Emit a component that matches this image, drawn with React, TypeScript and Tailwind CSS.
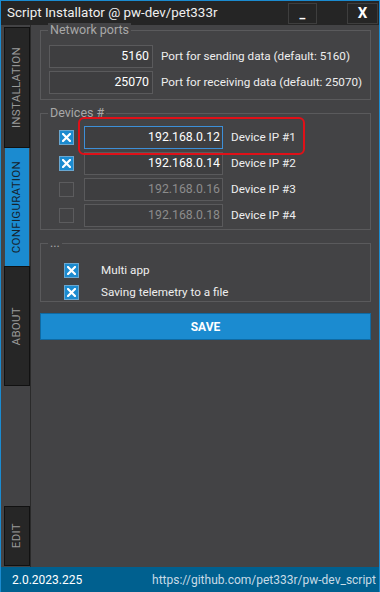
import React from "react";

const font = { fontFamily: 'Roboto, "Noto Sans", sans-serif' };

function Check({ on }: { on: boolean }) {
  if (!on) {
    return <div className="w-[15px] h-[15px] border border-[#5c5c5e] bg-[#434345]" />;
  }
  return (
    <div className="w-[15px] h-[15px] border border-[#6aa6cf] bg-[#1b8bd0] flex items-center justify-center">
      <svg width="9" height="9" viewBox="0 0 9 9">
        <path d="M1 1 L8 8 M8 1 L1 8" stroke="white" strokeWidth="2.2" strokeLinecap="square" />
      </svg>
    </div>
  );
}

function Tab({ label, active, h }: { label: string; active?: boolean; h: string }) {
  return (
    <div
      className={
        active
          ? `mx-[4px] w-[24px] ${h} bg-[#1b8bd0] flex items-center justify-center`
          : `ml-[3px] w-[26px] ${h} bg-[#262626] border border-[#111] flex items-center justify-center`
      }
    >
      <span
        className={`[writing-mode:vertical-rl] rotate-180 text-[11.5px] tracking-[0.3px] ${
          active ? "text-[#16222c]" : "text-[#9a9a9a]"
        }`}
      >
        {label}
      </span>
    </div>
  );
}

function Group({ title, children, cls }: { title: string; children: React.ReactNode; cls: string }) {
  return (
    <div className={`relative border border-[#5a5a5c] ${cls}`}>
      <span className="absolute -top-[8px] left-[7px] px-[2px] bg-[#434345] text-[12.5px] leading-[14px] text-[#a8a8a8]">
        {title}
      </span>
      {children}
    </div>
  );
}

const devices = [
  { ip: "192.168.0.12", on: true, focus: true },
  { ip: "192.168.0.14", on: true },
  { ip: "192.168.0.16", on: false },
  { ip: "192.168.0.18", on: false },
];

export default function App() {
  return (
    <div style={font} className="w-[380px] h-[592px] flex flex-col bg-[#434345] border-x border-t border-[#1b8bd0] overflow-hidden">
      <div className="h-[24px] bg-[#252525] flex items-center shrink-0">
        <span className="ml-[6px] text-[13.4px] text-[#f0f0f0] whitespace-nowrap">Script Installator @ pw-dev/pet333r</span>
        <div className="ml-auto mr-[30px] w-[29px] h-[21px] border border-[#3e3e3e] flex items-end justify-center pb-[2px] text-white text-[13px] leading-[14px] font-bold">
          _
        </div>
        <div className="mr-[1px] w-[31px] h-[21px] border border-[#3e3e3e] flex items-center justify-center text-white text-[15px] font-bold">
          X
        </div>
      </div>

      <div className="flex-1 flex min-h-0">
        <div className="w-[29px] border-r border-[#2a2a2a] box-content pt-[2px] flex flex-col">
          <Tab label="INSTALLATION" h="h-[121px]" />
          <Tab label="CONFIGURATION" active h="h-[118px]" />
          <Tab label="ABOUT" h="h-[120px]" />
          <div className="h-[120px]" />
          <Tab label="EDIT" h="h-[60px]" />
        </div>

        <div className="flex-1 min-w-0 pl-[9px] pr-[8px] pt-[5px] text-[11.7px] text-[#eeeeee] whitespace-nowrap">
          <Group title="Network ports" cls="h-[70px] pt-[14px] pl-[8px]">
            <div className="flex flex-col gap-[3px]">
              {[
                ["5160", "Port for sending data (default: 5160)"],
                ["25070", "Port for receiving data (default: 25070)"],
              ].map(([v, l]) => (
                <div key={v} className="flex items-center">
                  <div className="w-[104px] h-[23px] border border-[#5a5a5c] bg-[#3e3e40] flex items-center justify-end pr-[3px] text-[12.3px] text-white">
                    {v}
                  </div>
                  <span className="ml-[8px]">{l}</span>
                </div>
              ))}
            </div>
          </Group>

          <Group title="Devices #" cls="mt-[13px] h-[117px] pt-[12px] pl-[18px]">
            <div className="relative flex flex-col gap-[3px]">
              <div className="absolute left-[19px] -top-[9px] w-[227px] h-[38px] border-2 border-[#e01018] rounded-[6px]" />
              {devices.map((d, i) => (
                <div key={i} className="flex items-center">
                  <Check on={d.on} />
                  <div
                    className={`ml-[10px] w-[139px] h-[23px] border ${
                      d.focus ? "border-[#3d8fd8]" : "border-[#5a5a5c]"
                    } bg-[#3e3e40] flex items-center justify-end pr-[2px] text-[12.3px] ${
                      d.on ? "text-white" : "text-[#8c8c8c]"
                    }`}
                  >
                    {d.ip}
                  </div>
                  <span className="ml-[8px]">Device IP #{i + 1}</span>
                </div>
              ))}
            </div>
          </Group>

          <Group title="..." cls="mt-[13px] h-[59px] pt-[18px] pl-[23px]">
            <div className="flex flex-col gap-[4px]">
              <div className="flex items-center">
                <Check on />
                <span className="ml-[22px]">Multi app</span>
              </div>
              <div className="flex items-center">
                <Check on />
                <span className="ml-[22px]">Saving telemetry to a file</span>
              </div>
            </div>
          </Group>

          <button className="mt-[11px] w-full h-[27px] bg-[#1b8bd0] border border-[#0f6aa3] text-white text-[12px] font-bold">
            SAVE
          </button>
        </div>
      </div>

      <div className="h-[25px] shrink-0 bg-[#00608f] flex items-center justify-between pl-[11px] pr-[3px] text-[12px]">
        <span className="text-white">2.0.2023.225</span>
        <span className="text-[#c8dbe6]">https://github.com/pet333r/pw-dev_script</span>
      </div>
    </div>
  );
}
